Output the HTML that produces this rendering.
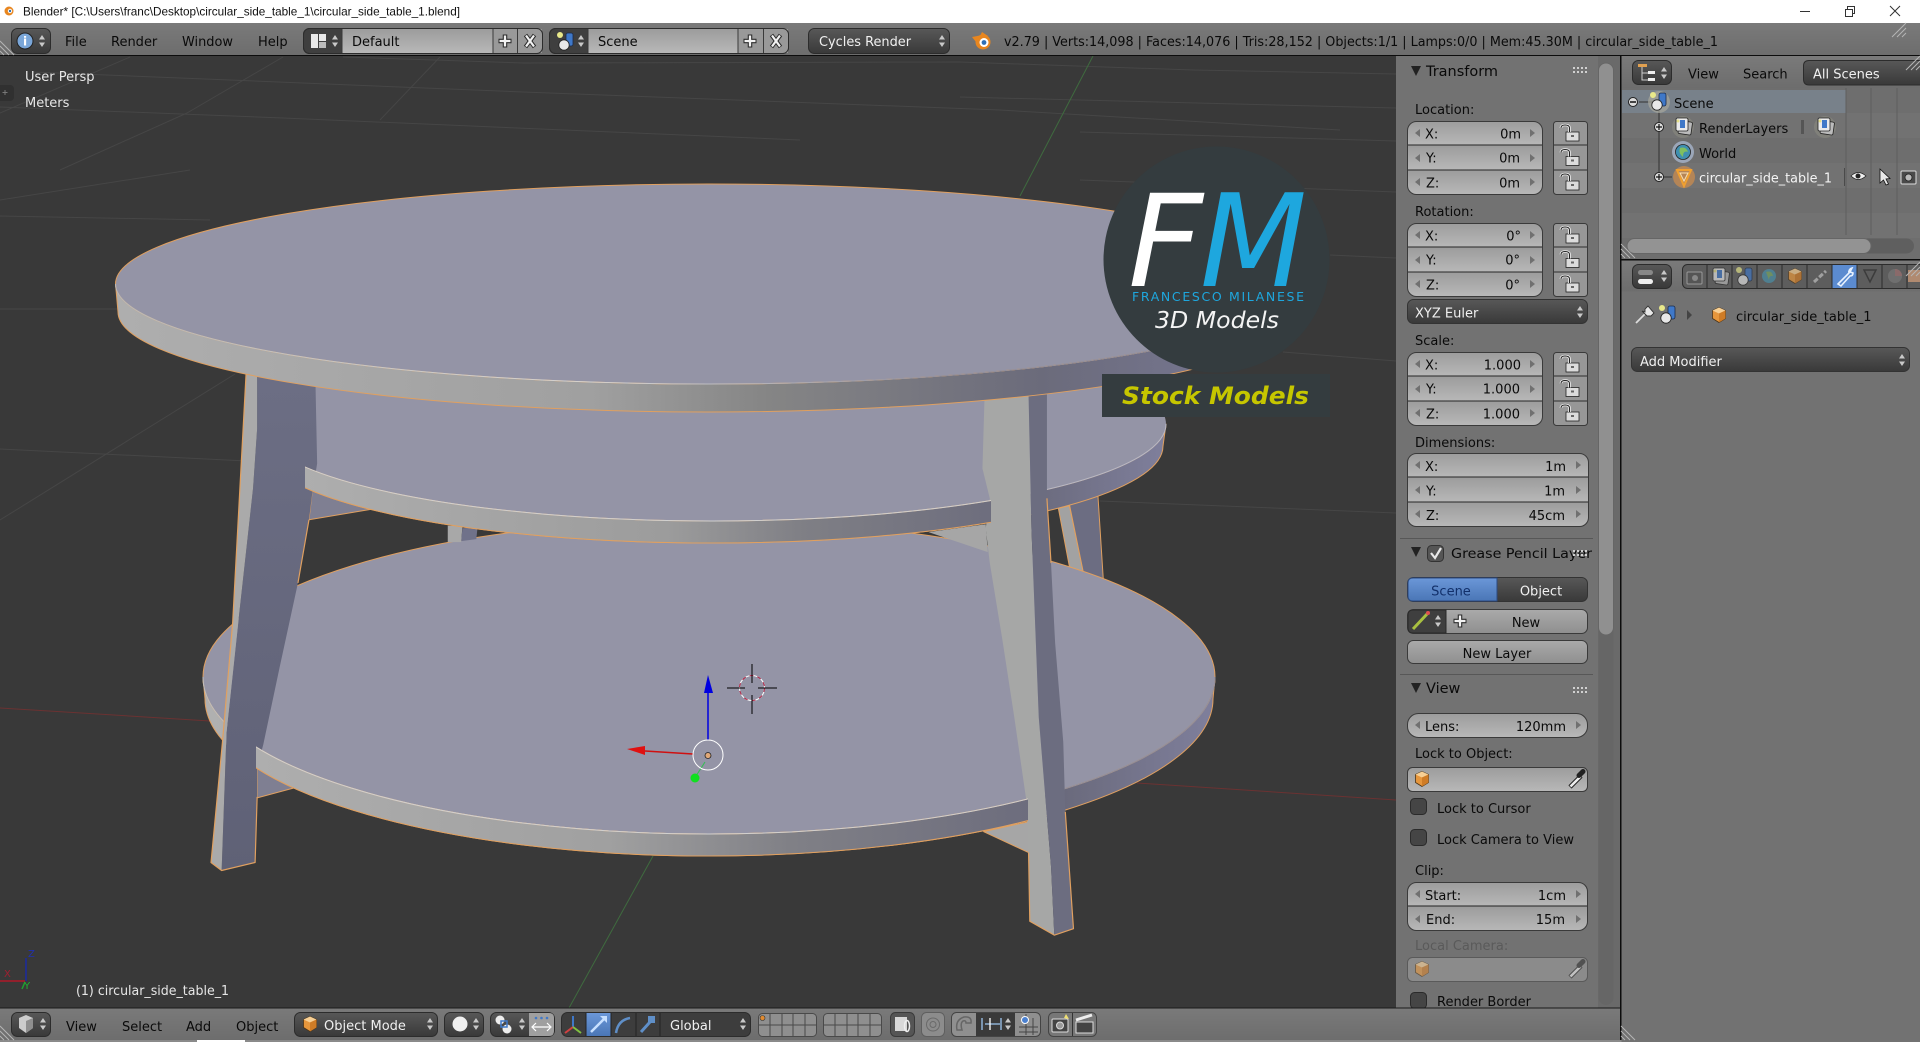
<!DOCTYPE html>
<html><head><meta charset="utf-8"><title>Blender</title>
<style>
html,body{margin:0;padding:0;background:#727272;overflow:hidden}
svg{display:block}
text{font-family:"DejaVu Sans","Liberation Sans",sans-serif;font-size:13px;fill:#0a0a0a}
.w{fill:#f0f0f0}.g{fill:#555}
.o{font-style:oblique}
</style></head><body>
<svg xmlns="http://www.w3.org/2000/svg" width="1920" height="1042" viewBox="0 0 1920 1042">
<defs>
<linearGradient id="rowg" gradientUnits="userSpaceOnUse" x1="0" y1="0" x2="0" y2="24.5" spreadMethod="repeat"><stop offset="0" stop-color="#9c9c9c"/><stop offset="1" stop-color="#b8b8b8"/></linearGradient>
<linearGradient id="fld" x1="0" y1="0" x2="0" y2="1"><stop offset="0" stop-color="#9c9c9c"/><stop offset="1" stop-color="#b8b8b8"/></linearGradient>
<linearGradient id="btn" x1="0" y1="0" x2="0" y2="1"><stop offset="0" stop-color="#aaa"/><stop offset="1" stop-color="#8f8f8f"/></linearGradient>
<linearGradient id="drk" x1="0" y1="0" x2="0" y2="1"><stop offset="0" stop-color="#585858"/><stop offset="1" stop-color="#393939"/></linearGradient>
<linearGradient id="blu" x1="0" y1="0" x2="0" y2="1"><stop offset="0" stop-color="#6b97d8"/><stop offset="1" stop-color="#4a76b6"/></linearGradient>
<linearGradient id="hdr" x1="0" y1="0" x2="0" y2="1"><stop offset="0" stop-color="#7a7a7a"/><stop offset="1" stop-color="#6d6d6d"/></linearGradient>
<linearGradient id="rimT" gradientUnits="userSpaceOnUse" x1="116" y1="0" x2="1302" y2="0"><stop offset="0" stop-color="#aeaeae"/><stop offset=".4" stop-color="#a0a0a0"/><stop offset=".55" stop-color="#858585"/><stop offset=".78" stop-color="#6b6b7b"/><stop offset="1" stop-color="#7a7a98"/></linearGradient>
<linearGradient id="rimM" gradientUnits="userSpaceOnUse" x1="258" y1="0" x2="1166" y2="0"><stop offset="0" stop-color="#b0b0b0"/><stop offset=".45" stop-color="#9c9c9c"/><stop offset=".6" stop-color="#7f7f85"/><stop offset=".85" stop-color="#6a6a7c"/><stop offset="1" stop-color="#7f7f9c"/></linearGradient>
<linearGradient id="rimB" gradientUnits="userSpaceOnUse" x1="203" y1="0" x2="1215" y2="0"><stop offset="0" stop-color="#b0b0b0"/><stop offset=".4" stop-color="#a0a0a0"/><stop offset=".58" stop-color="#808086"/><stop offset=".85" stop-color="#6a6a7c"/><stop offset="1" stop-color="#7f7f9c"/></linearGradient>
<linearGradient id="hl" gradientUnits="userSpaceOnUse" x1="116" y1="0" x2="1302" y2="0"><stop offset="0" stop-color="#b8b8b8"/><stop offset=".4" stop-color="#d4d4d4"/><stop offset=".7" stop-color="#8e8e9e"/><stop offset="1" stop-color="#8e8e9e"/></linearGradient>
<linearGradient id="legd" x1="0" y1="0" x2="0" y2="1"><stop offset="0" stop-color="#6c6e84"/><stop offset="1" stop-color="#5f6176"/></linearGradient>
<clipPath id="cm"><rect x="305" y="440" width="686" height="120"/></clipPath>
<clipPath id="cb"><rect x="256" y="700" width="772" height="180"/></clipPath>
<clipPath id="cv"><rect x="0" y="56" width="1396" height="952"/></clipPath>
<clipPath id="cs"><rect x="1396" y="56" width="202" height="952"/></clipPath>
<clipPath id="cr"><rect x="1621" y="56" width="299" height="986"/></clipPath>

<path id="updn" d="M0-6L3-1.500H-3ZM0 6L3 1.500H-3Z" fill="#c9c9c9"/>
<path id="updnk" d="M0-6L3-1.500H-3ZM0 6L3 1.500H-3Z" fill="#b8b8b8"/>
<path id="al" d="M3-4V4L-2 0Z" fill="#707070"/>
<path id="ar" d="M-3-4V4L2 0Z" fill="#707070"/>
<g id="cube"><path d="M0-7.500L6.500-4.500V3.500L0 7.500L-6.500 3.500V-4.500Z" fill="#e6963c" stroke="#4a3418" stroke-width=".8"/><path d="M0-7.500L6.500-4.500L0-1.500L-6.500-4.500Z" fill="#f7cf94"/><path d="M0-1.500V7.500L6.500 3.500V-4.500Z" fill="#cf7c26"/></g>
<g id="sceneic"><circle cx="-6" cy="-7" r="3" fill="#e8e88a"/><rect x="0" y="-9" width="7" height="13" rx="2" fill="#3f78c8" stroke="#1b2b4a" stroke-width=".8"/><circle cx="-2" cy="3" r="5.200" fill="#e8e8e8" stroke="#222" stroke-width=".8"/></g>
<g id="rlic"><rect x="-4" y="-5" width="13" height="13" rx="1.500" fill="#bbb" stroke="#222" stroke-width=".8" transform="rotate(8)"/><rect x="-7" y="-8" width="12" height="13" rx="1.500" fill="#eaeaea" stroke="#222" stroke-width=".8"/><rect x="-3" y="-6" width="5" height="8" fill="#3f78c8"/><circle cx="-5" cy="-5" r="1.500" fill="#e6e08a"/></g>
<g id="lock"><rect x="13" y="11" width="13" height="9" fill="#dcdcdc" stroke="#222" stroke-width=".8"/><rect x="18" y="14" width="3" height="2" fill="#666"/><path d="M8 7Q8 4 12 4Q16.500 4 16.500 7V11" fill="none" stroke="#eee" stroke-width="2.600"/><path d="M8 7Q8 4 12 4Q16.500 4 16.500 7V11" fill="none" stroke="#222" stroke-width="1"/></g>
<g id="g135"><rect x=".5" y=".5" width="135" height="73" rx="9" fill="url(#rowg)" stroke="#3a3a3a"/><path d="M1 24H135M1 49H135" stroke="#262626"/><use href="#al" x="10" y="12"/><use href="#al" x="10" y="37"/><use href="#al" x="10" y="61"/><use href="#ar" x="126" y="12"/><use href="#ar" x="126" y="37"/><use href="#ar" x="126" y="61"/></g>
<g id="g181"><rect x=".5" y=".5" width="181" height="73" rx="9" fill="url(#rowg)" stroke="#3a3a3a"/><path d="M1 24H181M1 49H181" stroke="#262626"/><use href="#al" x="10" y="12"/><use href="#al" x="10" y="37"/><use href="#al" x="10" y="61"/><use href="#ar" x="172" y="12"/><use href="#ar" x="172" y="37"/><use href="#ar" x="172" y="61"/></g>
<g id="locks"><rect x=".5" y=".5" width="34" height="73" rx="3" fill="#979797" stroke="#3a3a3a"/><path d="M1 24H34M1 49H34" stroke="#2e2e2e"/><use href="#lock" x="0" y="0"/><use href="#lock" x="0" y="24.500"/><use href="#lock" x="0" y="49"/></g>
<g id="chk"><rect x=".5" y=".5" width="16" height="16" rx="4" fill="#454545" stroke="#2a2a2a"/></g>
<g id="dots" fill="#d0d0d0"><rect x="0" y="0" width="2" height="2"/><rect x="4" y="0" width="2" height="2"/><rect x="8" y="0" width="2" height="2"/><rect x="12" y="0" width="2" height="2"/><rect x="0" y="4" width="2" height="2"/><rect x="4" y="4" width="2" height="2"/><rect x="8" y="4" width="2" height="2"/><rect x="12" y="4" width="2" height="2"/></g>
<g id="hatch" fill="none" stroke="#b5b5b5" stroke-width="1"><path d="M0 0L14 14M0 5L9 14M0 10L4 14"/></g>
<g id="plusi"><path d="M0-6.500V6.500M-6.500 0H6.500" stroke="#2c2c2c" stroke-width="4.500"/><path d="M0-5.500V5.500M-5.500 0H5.500" stroke="#f2f2f2" stroke-width="2.300"/></g>
<g id="xi"><path d="M-4.500-6L4.500 6M4.500-6L-4.500 6" stroke="#2c2c2c" stroke-width="4.200"/><path d="M-4-5.500L4 5.500M4-5.500L-4 5.500" stroke="#f2f2f2" stroke-width="2.200"/></g>
<g id="drpr"><path d="M-7 8L4-3" stroke="#222" stroke-width="4.500"/><path d="M-6.500 7.500L3.500-2.500" stroke="#eee" stroke-width="2.500"/><path d="M2-3.500L6-7.500" stroke="#222" stroke-width="5" stroke-linecap="round"/></g>
</defs>

<!-- window title bar -->
<rect width="1920" height="23" fill="#fff"/>
<circle cx="9" cy="11" r="4.500" fill="#e8861f"/><circle cx="10" cy="11" r="2.200" fill="#fff"/><circle cx="10" cy="11" r="1.200" fill="#2e6fb5"/>
<text x="23" y="15.500" textLength="437" lengthAdjust="spacingAndGlyphs" style="font-family:'Liberation Sans',sans-serif;font-size:12px;fill:#111">Blender*  [C:\Users\franc\Desktop\circular_side_table_1\circular_side_table_1.blend]</text>
<path d="M1800 11.500H1810" stroke="#333" stroke-width="1"/>
<rect x="1845.500" y="9.500" width="7" height="7" fill="#fff" stroke="#333"/><path d="M1847.500 9.500V6.500H1854.500V13.500H1852.500" fill="none" stroke="#333"/>
<path d="M1890 6L1900 16M1900 6L1890 16" stroke="#333"/>

<!-- viewport -->
<rect x="0" y="56" width="1396" height="952" fill="#393939"/>
<g clip-path="url(#cv)">
<g stroke="#464646" stroke-width="1" fill="none">
<path d="M0 113L130 57"/><path d="M187 113L283 57M60 170L187 113"/><path d="M380 120L440 57"/><path d="M33 72L523 92L1000 110L1340 130"/><path d="M0 107L283 118L800 140"/><path d="M343 57L523 63L960 62L1193 70L1396 74"/><path d="M960 97L1197 103L1396 108"/><path d="M1080 132L1396 141"/><path d="M1080 180L1396 192"/><path d="M1330 255L1396 258"/><path d="M1283 352L1396 361"/><path d="M1100 501L1396 513"/><path d="M0 200L190 170"/><path d="M0 216L210 220"/><path d="M0 309L120 309"/><path d="M0 449L247 461"/><path d="M0 520L235 374"/>
</g>
<path d="M1093 56L1020 196" stroke="#3f6b3f"/><path d="M653 856L569 1008" stroke="#3f6b3f"/>
<path d="M0 708L210 721" stroke="#6b3232"/><path d="M1137 783L1396 800" stroke="#6b3232"/>

<!-- table -->
<g stroke-linejoin="round">
<!-- parts behind the lower shelf -->
<g transform="translate(100,170) scale(.40816,.4975)">
<path d="M385 1200L385 1262L485 1240Z" fill="#7f7f92" stroke="#e0a060" stroke-width="1" vector-effect="non-scaling-stroke"/>
</g>
<g transform="translate(700,170) scale(.40816,.4975)">
<path d="M695 1330L805 1372V1310Z" fill="#a6a6a6" stroke="#e0a060" stroke-width="1" vector-effect="non-scaling-stroke"/>
<path d="M878 680L905 675L940 812L905 797Z" fill="#a2a2a2" stroke="#e0a060" stroke-width="1" vector-effect="non-scaling-stroke"/>
<path d="M905 672L975 655L988 822L940 812Z" fill="#6c6d82" stroke="#e0a060" stroke-width="1" vector-effect="non-scaling-stroke"/>
</g>
<!-- lower shelf -->
<path d="M203 677A506 157 0 0 0 1215 677L1213 699A504 157 0 0 1 205 699Z" fill="url(#rimB)" stroke="#e0a060"/>
<ellipse cx="709" cy="677" rx="506" ry="157" fill="#9494a6" stroke="#e0a060"/>
<path d="M203 677A506 157 0 0 0 1215 677" fill="none" stroke="url(#hl)"/>
<!-- parts between shelves -->
<g transform="translate(100,170) scale(.40816,.4975)">
<path d="M520 645L512 703L665 682Z" fill="#7f7f92" stroke="#e0a060" stroke-width="1" vector-effect="non-scaling-stroke"/>
<path d="M852 715H888L885 748H852Z" fill="#a8a8a8"/>
<path d="M888 720L925 718L922 742L885 746Z" fill="#70728a"/>
</g>
<g transform="translate(700,170) scale(.40816,.4975)">
<path d="M560 728L705 768L700 712Z" fill="#a6a6a6"/>
</g>
<!-- middle shelf -->
<path d="M258 424A454 97 0 0 0 1166 424L1163 446A451 97 0 0 1 261 446Z" fill="url(#rimM)" stroke="#e0a060"/>
<ellipse cx="712" cy="424" rx="454" ry="97" fill="#9494a6"/>
<path d="M258 424A454 97 0 0 0 1166 424" fill="none" stroke="#b8b8c4" stroke-width="1"/>
<!-- left front leg -->
<g transform="translate(100,170) scale(.40816,.4975)">
<path d="M385 410L528 432L532 590L520 650L512 703L485 830L440 1000L400 1155L385 1200V1260L380 1392L298 1408L310 1130L340 900L375 640L385 520Z" fill="url(#legd)"/>
<path d="M358 408L385 410L385 520L375 640L340 900L310 1130L298 1408L272 1392L300 1150L325 910Z" fill="#aaaaaa"/>
<path d="M358 408L325 910L300 1150L272 1392L298 1408L380 1392L385 1260M512 703L485 830" fill="none" stroke="#e0a060" stroke-width="1.200" vector-effect="non-scaling-stroke"/>
</g>
<!-- right front leg -->
<g transform="translate(700,170) scale(.40816,.4975)">
<path d="M697 460L805 452L812 720L830 1100L860 1400L868 1538L808 1510L805 1400L800 1270L770 1100L740 940L710 790L700 720L710 660L692 600Z" fill="#a6a7a6"/>
<path d="M805 452L850 450L850 660L860 790L870 950L890 1150L895 1290L915 1525L868 1538L860 1400L830 1100L812 720Z" fill="#6c6d80"/>
<path d="M805 1372L808 1510L868 1538L915 1525L895 1290M850 660L860 790" fill="none" stroke="#e0a060" stroke-width="1.200" vector-effect="non-scaling-stroke"/>
</g>
<!-- shelf rims in front of left leg -->
<g clip-path="url(#cm)">
<path d="M258 424A454 97 0 0 0 1166 424L1163 446A451 97 0 0 1 261 446Z" fill="url(#rimM)" stroke="#e0a060"/>
<path d="M258 424A454 97 0 0 0 1166 424" fill="none" stroke="#d0d0d0"/>
</g>
<g clip-path="url(#cb)">
<path d="M203 677A506 157 0 0 0 1215 677L1213 699A504 157 0 0 1 205 699Z" fill="url(#rimB)" stroke="#e0a060"/>
<path d="M203 677A506 157 0 0 0 1215 677" fill="none" stroke="#d0d0d0"/>
</g>
<!-- top disc -->
<path d="M115.500 284A593 100 0 0 0 1301.500 284L1299 312A590.500 100 0 0 1 118 312Z" fill="url(#rimT)" stroke="#e0a060"/>
<ellipse cx="708.500" cy="284" rx="593" ry="100" fill="#9494a6" stroke="#e0a060"/>
<path d="M115.500 284A593 100 0 0 0 1301.500 284" fill="none" stroke="url(#hl)"/>
</g>

<!-- manipulator -->
<path d="M708 740V693" stroke="#0000e0" stroke-width="1.500"/><path d="M708 675L713 693H704Z" fill="#0000e0"/>
<path d="M693 754L645 751" stroke="#d01010" stroke-width="1.500"/><path d="M627 749L645 746V755Z" fill="#e01010"/>
<path d="M705 762L696 776" stroke="#30c050"/><circle cx="695" cy="778" r="4.500" fill="#10e020"/>
<circle cx="708" cy="755" r="15" fill="none" stroke="#fff" stroke-width="1"/>
<circle cx="708" cy="755.500" r="3" fill="#e0a878" stroke="#222" stroke-width=".8"/>
<circle cx="752" cy="688" r="12.500" fill="none" stroke="#fff"/><circle cx="752" cy="688" r="12.500" fill="none" stroke="#b02040" stroke-dasharray="4 4"/>
<path d="M727 688H745M758 688H777M752 664V683M752 695V714" stroke="#000" stroke-width="1"/>

<!-- logo -->
<circle cx="1216.500" cy="259.500" r="113" fill="#343c3f"/>
<rect x="1102" y="374" width="228" height="43" fill="#343c3f"/>
<text x="1128" y="286" class="o" textLength="75" lengthAdjust="spacingAndGlyphs" style="font-size:128px;fill:#fff">F</text>
<text x="1200" y="286" class="o" textLength="107" lengthAdjust="spacingAndGlyphs" style="font-size:128px;fill:#1ea7de">M</text>
<text x="1132" y="301" textLength="172" style="font-size:12.500px;fill:#1ea7de">FRANCESCO MILANESE</text>
<text x="1155" y="328" class="o" textLength="124" lengthAdjust="spacingAndGlyphs" style="font-size:23px;fill:#f4f4f4">3D Models</text>
<text x="1122" y="404" class="o" textLength="187" lengthAdjust="spacingAndGlyphs" style="font-size:24px;font-weight:bold;fill:#c6c600">Stock Models</text>

<!-- viewport texts -->
<text x="25" y="81" class="w" style="fill:#e8e8e8">User Persp</text>
<text x="25" y="107" class="w" style="fill:#e8e8e8">Meters</text>
<rect x="-4" y="85" width="18" height="16" rx="4" fill="#303030"/><path d="M5 90v5M2.500 92.500h5" stroke="#777"/>
<text x="76" y="995" style="fill:#e6e6e6" textLength="153" lengthAdjust="spacingAndGlyphs">(1) circular_side_table_1</text>
<path d="M26 958V981" stroke="#1a2aa0" stroke-width="1.500"/><path d="M0 981H25" stroke="#b01828" stroke-width="1.500"/><path d="M25 982L22 989" stroke="#20a030" stroke-width="1.500"/>
<text x="28" y="957" style="font-size:10px;fill:#2030b0">Z</text><text x="4" y="977" style="font-size:10px;fill:#a02030">X</text><text x="24" y="989" style="font-size:10px;fill:#20b030">Y</text>
</g>

<!-- top toolbar -->
<rect x="0" y="23" width="1920" height="32" fill="url(#hdr)"/>
<rect x="0" y="55" width="1920" height="1" fill="#0c0c0c"/>
<use href="#hatch" x="0" y="41"/>
<use href="#hatch" x="-1906" y="23" transform="scale(-1,1)"/>
<rect x="11.500" y="28.500" width="39" height="25" rx="6" fill="url(#drk)" stroke="#2c2c2c"/>
<circle cx="25" cy="41" r="8" fill="#7aa6d8" stroke="#222"/><text x="25" y="45.500" text-anchor="middle" style="font-size:12px;font-weight:bold;fill:#fff">i</text><use href="#updn" x="42" y="41"/>
<text x="65" y="46">File</text><text x="111" y="46">Render</text><text x="182" y="46" textLength="51" lengthAdjust="spacingAndGlyphs">Window</text><text x="258" y="46">Help</text>
<rect x="303.500" y="28.500" width="239" height="25" rx="6" fill="#3f3f3f" stroke="#2c2c2c"/>
<rect x="342" y="29" width="151" height="24" fill="url(#fld)"/><rect x="493" y="29" width="49" height="24" fill="#999" /><path d="M517.500 29V53M342 29V53M493 29V53" stroke="#3a3a3a"/>
<rect x="303.500" y="28.500" width="239" height="25" rx="6" fill="none" stroke="#2c2c2c"/>
<rect x="311" y="34" width="7" height="14" fill="#e8e8e8"/><rect x="319" y="34" width="7" height="7" fill="#e8e8e8"/><rect x="319" y="42" width="7" height="6" fill="#bbb"/><use href="#updn" x="335" y="41"/>
<text x="352" y="46">Default</text>
<use href="#plusi" x="505" y="41"/><use href="#xi" x="530" y="41"/>
<rect x="549.500" y="28.500" width="239" height="25" rx="6" fill="#3f3f3f" stroke="#2c2c2c"/>
<rect x="588" y="29" width="150" height="24" fill="url(#fld)"/><rect x="738" y="29" width="50" height="24" fill="#999"/><path d="M763.500 29V53M588 29V53M738 29V53" stroke="#3a3a3a"/>
<rect x="549.500" y="28.500" width="239" height="25" rx="6" fill="none" stroke="#2c2c2c"/>
<use href="#sceneic" x="566" y="42"/><use href="#updn" x="581" y="41"/>
<text x="598" y="46">Scene</text>
<use href="#plusi" x="750" y="41"/><use href="#xi" x="776" y="41"/>
<rect x="808.500" y="28.500" width="141" height="25" rx="6" fill="url(#drk)" stroke="#2c2c2c"/>
<text x="819" y="46" class="w" textLength="92" lengthAdjust="spacingAndGlyphs">Cycles Render</text><use href="#updn" x="942" y="41"/>
<circle cx="983" cy="42" r="7.500" fill="#e8861f"/><circle cx="984" cy="42.500" r="4.500" fill="#fff"/><circle cx="984" cy="42.500" r="2.400" fill="#2e6fb5"/><path d="M972 37L980 35.500L976 42Z" fill="#e8861f"/><path d="M982 32L988 36H980Z" fill="#e8861f"/>
<text x="1004" y="46" textLength="714" lengthAdjust="spacingAndGlyphs">v2.79 | Verts:14,098 | Faces:14,076 | Tris:28,152 | Objects:1/1 | Lamps:0/0 | Mem:45.30M | circular_side_table_1</text>

<!-- sidebar -->
<rect x="1396" y="56" width="224" height="952" fill="#727272"/>
<rect x="1598" y="56" width="22" height="952" fill="#6a6a6a"/>
<rect x="1598.500" y="63" width="15" height="942" rx="7.500" fill="#666"/>
<rect x="1598.500" y="63" width="15" height="572" rx="7.500" fill="#909090" stroke="#666"/>
<rect x="1620" y="56" width="1.500" height="986" fill="#0c0c0c"/>
<g clip-path="url(#cs)">
<path d="M1411 66H1421L1416 76Z" fill="#222"/><text x="1426" y="76" textLength="72" style="font-size:14.500px" lengthAdjust="spacingAndGlyphs">Transform</text><use href="#dots" x="1573" y="67"/>
<text x="1415" y="114">Location:</text>
<use href="#g135" x="1407" y="121"/><use href="#locks" x="1553" y="121"/>
<text x="1425" y="138.500">X:</text><text x="1521" y="138.500" text-anchor="end">0m</text>
<text x="1426" y="162.500">Y:</text><text x="1520" y="162.500" text-anchor="end">0m</text>
<text x="1426" y="187.500">Z:</text><text x="1520" y="187.500" text-anchor="end">0m</text>
<text x="1415" y="216">Rotation:</text>
<use href="#g135" x="1407" y="223"/><use href="#locks" x="1553" y="223"/>
<text x="1425" y="240.500">X:</text><text x="1521" y="240.500" text-anchor="end">0°</text>
<text x="1426" y="264.500">Y:</text><text x="1520" y="264.500" text-anchor="end">0°</text>
<text x="1426" y="289.500">Z:</text><text x="1520" y="289.500" text-anchor="end">0°</text>
<rect x="1407.500" y="299.500" width="180" height="24" rx="6" fill="url(#drk)" stroke="#333"/><text x="1415" y="317.500" class="w">XYZ Euler</text><use href="#updn" x="1580" y="312"/>
<text x="1415" y="345">Scale:</text>
<use href="#g135" x="1407" y="352"/><use href="#locks" x="1553" y="352"/>
<text x="1425" y="369.500">X:</text><text x="1521" y="369.500" text-anchor="end">1.000</text>
<text x="1426" y="393.500">Y:</text><text x="1520" y="393.500" text-anchor="end">1.000</text>
<text x="1426" y="418.500">Z:</text><text x="1520" y="418.500" text-anchor="end">1.000</text>
<text x="1415" y="447">Dimensions:</text>
<use href="#g181" x="1407" y="453"/>
<text x="1425" y="471">X:</text><text x="1566" y="471" text-anchor="end">1m</text>
<text x="1426" y="495.500">Y:</text><text x="1565" y="495.500" text-anchor="end">1m</text>
<text x="1426" y="520">Z:</text><text x="1565" y="520" text-anchor="end">45cm</text>
<path d="M1400 538.500H1593" stroke="#575757"/>
<path d="M1411 547H1421L1416 557Z" fill="#222"/>
<rect x="1427.500" y="545.500" width="16" height="16" rx="4" fill="#555" stroke="#333"/><path d="M1431 553L1435 558L1441 548" fill="none" stroke="#e8e8e8" stroke-width="2.200"/>
<text x="1451" y="558" textLength="141" lengthAdjust="spacingAndGlyphs" style="font-size:13.500px">Grease Pencil Layer</text><use href="#dots" x="1573" y="550"/>
<rect x="1407.500" y="577.500" width="180" height="24" rx="6" fill="url(#drk)" stroke="#333"/>
<path d="M1497 578V601H1413Q1408 601 1408 596V583Q1408 578 1413 578Z" fill="url(#blu)" stroke="#2c4a80"/>
<text x="1451" y="595.500" text-anchor="middle" style="fill:#12306a">Scene</text><text x="1541" y="595.500" text-anchor="middle" class="w">Object</text>
<rect x="1407.500" y="609.500" width="180" height="24" rx="6" fill="url(#btn)" stroke="#3a3a3a"/>
<path d="M1446 610V633H1413Q1408 633 1408 628V615Q1408 610 1413 610Z" fill="#3f3f3f" stroke="#2a2a2a"/>
<path d="M1413 629L1428 613" stroke="#a8c040" stroke-width="3"/><circle cx="1428" cy="613" r="2" fill="#e05050"/><use href="#updn" x="1438" y="621"/>
<use href="#plusi" x="1460" y="621"/>
<text x="1526" y="627" text-anchor="middle">New</text>
<rect x="1407.500" y="640.500" width="180" height="23" rx="6" fill="url(#btn)" stroke="#3a3a3a"/><text x="1497" y="658" text-anchor="middle">New Layer</text>
<path d="M1400 674.500H1593" stroke="#575757"/>
<path d="M1411 683H1421L1416 693Z" fill="#222"/><text x="1426" y="693" style="font-size:14.500px">View</text><use href="#dots" x="1573" y="687"/>
<rect x="1407.500" y="713.500" width="180" height="24" rx="11" fill="url(#fld)" stroke="#3a3a3a"/><use href="#al" x="1417" y="725"/><use href="#ar" x="1579" y="725"/>
<text x="1425" y="731">Lens:</text><text x="1566" y="731" text-anchor="end">120mm</text>
<text x="1415" y="758">Lock to Object:</text>
<rect x="1407.500" y="767.500" width="180" height="24" rx="5" fill="url(#fld)" stroke="#3a3a3a"/><use href="#cube" x="1422" y="779"/>
<use href="#drpr" x="1577" y="779"/>
<use href="#chk" x="1410" y="798"/><text x="1437" y="813">Lock to Cursor</text>
<use href="#chk" x="1410" y="829"/><text x="1437" y="844">Lock Camera to View</text>
<text x="1415" y="875">Clip:</text>
<rect x="1407.500" y="882.500" width="180" height="48" rx="9" fill="url(#rowg)" stroke="#3a3a3a"/><path d="M1408 906H1587" stroke="#222"/>
<use href="#al" x="1417" y="894"/><use href="#ar" x="1579" y="894"/><use href="#al" x="1417" y="919"/><use href="#ar" x="1579" y="919"/>
<text x="1425" y="900">Start:</text><text x="1566" y="900" text-anchor="end">1cm</text>
<text x="1426" y="924">End:</text><text x="1565" y="924" text-anchor="end">15m</text>
<text x="1415" y="950" class="g" style="fill:#5a5a5a">Local Camera:</text>
<rect x="1407.500" y="957.500" width="180" height="24" rx="5" fill="#8b8b8b" stroke="#5a5a5a"/><use href="#cube" x="1422" y="969" opacity=".6"/>
<g opacity=".55"><use href="#drpr" x="1577" y="969"/></g>
<use href="#chk" x="1410" y="992"/><text x="1437" y="1006">Render Border</text>
</g>

<!-- bottom header -->
<rect x="0" y="1008" width="1620" height="32" fill="url(#hdr)"/>
<rect x="0" y="1040" width="1920" height="2" fill="#8a8a8a"/><rect x="197" y="1040" width="48" height="2" fill="#fff"/>
<rect x="0" y="1007.500" width="1620" height="1" fill="#1a1a1a"/>
<use href="#hatch" x="0" y="1026"/>
<rect x="11.500" y="1012.500" width="39" height="24" rx="6" fill="url(#drk)" stroke="#2c2c2c"/>
<path d="M19 1018L26 1015L33 1018V1028L26 1033L19 1028Z" fill="#ccc"/><path d="M26 1021V1033L33 1028V1018Z" fill="#8f8f8f"/><use href="#updn" x="43" y="1024"/>
<text x="66" y="1031">View</text><text x="122" y="1031">Select</text><text x="186" y="1031">Add</text><text x="236" y="1031">Object</text>
<rect x="294.500" y="1012.500" width="143" height="24" rx="6" fill="url(#drk)" stroke="#2c2c2c"/><use href="#cube" x="310" y="1024"/><text x="324" y="1030" class="w">Object Mode</text><use href="#updn" x="430" y="1024"/>
<rect x="444.500" y="1012.500" width="39" height="24" rx="6" fill="url(#drk)" stroke="#2c2c2c"/><circle cx="460" cy="1024" r="7.500" fill="#f0f0f0"/><use href="#updn" x="476" y="1024"/>
<rect x="490.500" y="1012.500" width="64" height="24" rx="6" fill="url(#drk)" stroke="#2c2c2c"/><path d="M529 1013H549Q554 1013 554 1018V1031Q554 1036 549 1036H529Z" fill="#9f9f9f"/>
<circle cx="500" cy="1020" r="4.500" fill="#eee"/><circle cx="507" cy="1029" r="4.500" fill="#eee"/><rect x="501" y="1021" width="6" height="6" fill="none" stroke="#3f78c8" stroke-width="1.500"/><use href="#updn" x="522" y="1024"/>
<circle cx="536" cy="1018" r="1.300" fill="#3f78c8"/><circle cx="541.500" cy="1018" r="1.300" fill="#3f78c8"/><circle cx="547" cy="1018" r="1.300" fill="#3f78c8"/><path d="M533 1027H550M536 1023L532 1027L536 1031M547 1023L551 1027L547 1031" fill="none" stroke="#fff" stroke-width="1.200"/>
<rect x="561.500" y="1012.500" width="189" height="24" rx="6" fill="#3d3d3d" stroke="#2c2c2c"/>
<path d="M586 1013H611V1036H586Z" fill="url(#blu)"/><path d="M586 1013V1036M611 1013V1036M636 1013V1036M660 1013V1036" stroke="#222"/>
<path d="M573 1027V1016" stroke="#3f78c8" stroke-width="2"/><path d="M573 1027L565 1033" stroke="#d04040" stroke-width="2"/><path d="M573 1027L581 1033" stroke="#80c040" stroke-width="2"/>
<path d="M591 1032L604 1019" stroke="#c8e0ff" stroke-width="2.500"/><path d="M600 1016L607 1016L607 1023Z" fill="#c8e0ff"/>
<path d="M616 1033Q618 1020 630 1018" fill="none" stroke="#5f8fc8" stroke-width="2.500"/>
<path d="M641 1032L650 1022" stroke="#5f8fc8" stroke-width="3"/><rect x="648" y="1016" width="7" height="7" fill="#5f8fc8"/>
<text x="670" y="1030" class="w">Global</text><use href="#updn" x="743" y="1024"/>
<g fill="#8f8f8f" stroke="#4a4a4a"><rect x="758.500" y="1013.500" width="58" height="23" rx="4"/><rect x="823.500" y="1013.500" width="58" height="23" rx="4"/></g>
<path d="M770 1014V1036M782 1014V1036M793 1014V1036M805 1014V1036M759 1025H816M835 1014V1036M847 1014V1036M858 1014V1036M870 1014V1036M824 1025H881" stroke="#4a4a4a"/>
<circle cx="762.500" cy="1018" r="2.500" fill="#e08a30" stroke="#333" stroke-width=".6"/>
<rect x="890.500" y="1012.500" width="24" height="24" rx="5" fill="#555" stroke="#3a3a3a"/><rect x="895" y="1017" width="12" height="14" fill="#d8d8d8"/><ellipse cx="907" cy="1026" rx="2.500" ry="5.500" fill="none" stroke="#eee" stroke-width="1.500"/>
<rect x="921.500" y="1012.500" width="23" height="24" rx="5" fill="#8c8c8c" stroke="#5f5f5f"/><circle cx="933" cy="1024.500" r="6.500" fill="none" stroke="#6a6a6a"/><circle cx="933" cy="1024.500" r="3" fill="none" stroke="#6a6a6a"/>
<rect x="951.500" y="1012.500" width="89" height="24" rx="5" fill="#8f8f8f" stroke="#444"/><rect x="976" y="1013" width="39" height="23" fill="#3a3a3a"/>
<path d="M957 1030Q955 1020 964 1017Q972 1016 971 1023L966 1023Q966 1020 963 1021Q960 1023 962 1030Z" fill="none" stroke="#666" stroke-width="1.500"/>
<path d="M982 1018V1030M1001 1018V1030M985 1024H1000" stroke="#9ec6f0" stroke-width="1.300"/><path d="M990 1018V1030" stroke="#fff" stroke-width="1.300"/><use href="#updn" x="1008" y="1024"/>
<path d="M1019 1027H1038M1026 1014V1035M1033 1018V1035M1019 1032H1038" stroke="#444"/><circle cx="1025" cy="1020" r="3.500" fill="#4a80d0" stroke="#fff"/>
<rect x="1048.500" y="1012.500" width="48" height="24" rx="5" fill="#777" stroke="#444"/><path d="M1072.500 1013V1036" stroke="#333"/>
<rect x="1052" y="1019" width="16" height="13" rx="1" fill="#444" stroke="#ddd"/><circle cx="1060" cy="1025.500" r="3.500" fill="#999" stroke="#ddd"/><path d="M1066 1014L1069 1019L1064 1018Z" fill="#f0e070"/>
<rect x="1076" y="1022" width="17" height="11" fill="#444" stroke="#ddd"/><path d="M1076 1020L1092 1015" stroke="#eee" stroke-width="3"/>

<!-- outliner -->
<rect x="1621.500" y="56" width="298.500" height="204" fill="#6e6e6e"/>
<rect x="1621.500" y="56" width="298.500" height="32" fill="url(#hdr)"/>
<rect x="1632.500" y="60.500" width="39" height="24" rx="6" fill="url(#drk)" stroke="#2c2c2c"/>
<rect x="1638" y="64" width="9" height="3" fill="#e0a050"/><path d="M1642 67V80H1648M1642 73H1648" stroke="#ccc" fill="none"/><rect x="1648" y="71" width="7" height="3" fill="#eee"/><rect x="1648" y="78" width="7" height="3" fill="#eee"/><use href="#updn" x="1664" y="73"/>
<text x="1688" y="78.500">View</text><text x="1743" y="78.500">Search</text>
<path d="M1925 60.500H1809Q1803.500 60.500 1803.500 66V79Q1803.500 85 1809 85H1925Z" fill="url(#drk)" stroke="#2c2c2c"/><text x="1813" y="78.500" class="w">All Scenes</text>
<use href="#hatch" x="-1920" y="56" transform="scale(-1,1)"/>
<rect x="1622" y="88" width="298" height="150" fill="#6e6e6e"/>
<rect x="1622" y="113" width="298" height="25" fill="#727272"/><rect x="1622" y="163" width="298" height="25" fill="#727272"/><rect x="1622" y="213" width="298" height="25" fill="#727272"/>
<rect x="1622" y="90" width="224" height="23" fill="#78818a"/>
<path d="M1846 88V235M1871 88V235M1897 88V235" stroke="#5f5f5f"/>
<path d="M1639 102H1655M1659 102V177M1664 177H1672" stroke="#333" fill="none"/>
<circle cx="1633" cy="102" r="4.500" fill="#ddd" stroke="#222"/><path d="M1630 102H1636" stroke="#111" stroke-width="1.500"/>
<circle cx="1659" cy="127" r="4.500" fill="#ddd" stroke="#222"/><path d="M1656 127H1662M1659 124V130" stroke="#111" stroke-width="1.200"/>
<circle cx="1659" cy="177" r="4.500" fill="#ddd" stroke="#222"/><path d="M1656 177H1662M1659 174V180" stroke="#111" stroke-width="1.200"/>
<circle cx="1659" cy="102" r="11" fill="#a8a89c" opacity=".7"/><use href="#sceneic" x="1659" y="102"/>
<circle cx="1683" cy="127" r="11" fill="#8a8a80" opacity=".6"/><use href="#rlic" x="1683" y="126"/>
<text x="1674" y="108">Scene</text><text x="1699" y="133">RenderLayers</text>
<rect x="1801" y="120" width="3" height="14" fill="#555"/>
<circle cx="1825" cy="127" r="11" fill="#8a8a80" opacity=".6"/><use href="#rlic" x="1825" y="126"/>
<circle cx="1683" cy="152" r="11" fill="#9ba6b8"/><circle cx="1683" cy="152" r="7.500" fill="#3f8fb0" stroke="#222" stroke-width=".8"/><path d="M1680 148Q1686 146 1688 152Q1683 150 1683 157Q1678 153 1680 148Z" fill="#7fbf60"/>
<text x="1699" y="158">World</text>
<circle cx="1684" cy="177" r="11" fill="#c48a50" opacity=".8"/><path d="M1677 170H1691L1684 186Z" fill="none" stroke="#f0a030" stroke-width="2"/><path d="M1680 173H1688L1684 181Z" fill="none" stroke="#fbe0b0"/>
<text x="1699" y="182.500" class="w" textLength="133" lengthAdjust="spacingAndGlyphs" style="fill:#f4f4f4">circular_side_table_1</text>
<path d="M1844.500 168V186" stroke="#4a4a4a" stroke-width="1"/>
<path d="M1851 176Q1858 169 1866 176Q1858 183 1851 176Z" fill="#f0f0f0" stroke="#222" stroke-width=".8"/><circle cx="1858" cy="176" r="2.500" fill="#222"/>
<path d="M1880 169V183L1883.500 180L1886 185L1888.500 184L1886 179L1890 178.500Z" fill="#e8e8e8" stroke="#111" stroke-width=".8"/>
<rect x="1901" y="171" width="15" height="13" rx="1" fill="#4a4a4a" stroke="#ddd"/><circle cx="1908.500" cy="177.500" r="3.500" fill="#bbb" stroke="#222" stroke-width=".8"/>
<rect x="1621.500" y="238" width="298.500" height="21" fill="#6e6e6e"/>
<rect x="1627" y="238.500" width="287" height="15" rx="7.500" fill="#5f5f5f"/>
<rect x="1627" y="238.500" width="244" height="15" rx="7.500" fill="#939393" stroke="#666"/>
<use href="#hatch" x="1621" y="244"/>
<rect x="1621" y="259" width="299" height="1.500" fill="#0c0c0c"/>

<!-- properties -->
<rect x="1621.500" y="260.500" width="298.500" height="782" fill="#727272"/>
<rect x="1621.500" y="260.500" width="298.500" height="31" fill="url(#hdr)"/>
<rect x="1632.500" y="264.500" width="39" height="24" rx="6" fill="url(#drk)" stroke="#2c2c2c"/>
<rect x="1638" y="270" width="15" height="5" rx="2.500" fill="#888"/><rect x="1638" y="279" width="15" height="5" rx="2.500" fill="#eee"/><use href="#updn" x="1664" y="276"/>
<rect x="1682.500" y="264.500" width="260" height="24" rx="5" fill="#5d5d5d" stroke="#2c2c2c"/>
<rect x="1832" y="265" width="25" height="23" fill="#5b8bd0"/>
<path d="M1707 265V288M1732 265V288M1757 265V288M1782 265V288M1807 265V288M1832 265V288M1857 265V288M1882 265V288M1907 265V288" stroke="#2c2c2c"/>
<rect x="1687" y="272" width="15" height="12" rx="1" fill="#555" stroke="#999"/><circle cx="1695" cy="278" r="3" fill="#888"/>
<g opacity=".65"><use href="#rlic" x="1720" y="276"/></g>
<g opacity=".65"><use href="#sceneic" x="1745" y="277"/></g>
<circle cx="1769" cy="276" r="7" fill="#4f7f90"/><path d="M1766 272Q1772 270 1773 276Q1769 275 1769 280Z" fill="#708f60"/>
<g opacity=".7"><use href="#cube" x="1795" y="276"/></g>
<path d="M1814 282L1826 271" stroke="#a0a0a0" stroke-width="3" fill="none" stroke-dasharray="5 2"/>
<path d="M1838 284L1849 273A4 4 0 0 1 1852 268L1850 272L1853 273Q1853 276 1850 276L1841 286Z" fill="none" stroke="#e8f2ff" stroke-width="1.600"/>
<path d="M1864 270H1876L1870 282Z" fill="none" stroke="#3c3c3c" stroke-width="1.500"/>
<circle cx="1895" cy="276" r="7" fill="#6f6f6f"/><path d="M1895 276L1895 269A7 7 0 0 1 1902 276Z" fill="#8a6a6a"/>
<rect x="1908" y="270" width="12" height="12" fill="#b08a70"/>
<use href="#hatch" x="-1920" y="262" transform="scale(-1,1)"/>
<path d="M1636 323L1645 314" stroke="#ddd" stroke-width="1.800"/><path d="M1642 311L1647 316L1651 316L1654 313L1648 306L1645 309L1645 312Z" fill="#e8e8e8" stroke="#333" stroke-width=".9"/>
<use href="#sceneic" x="1668" y="315"/>
<path d="M1687 310L1692 315L1687 320Z" fill="#444"/>
<use href="#cube" x="1719" y="315"/>
<text x="1736" y="321">circular_side_table_1</text>
<rect x="1631.500" y="347.500" width="278" height="24" rx="6" fill="url(#drk)" stroke="#333"/><text x="1640" y="366" class="w">Add Modifier</text><use href="#updn" x="1902" y="360"/>
<use href="#hatch" x="1621" y="1026"/>
</svg>
</body></html>
